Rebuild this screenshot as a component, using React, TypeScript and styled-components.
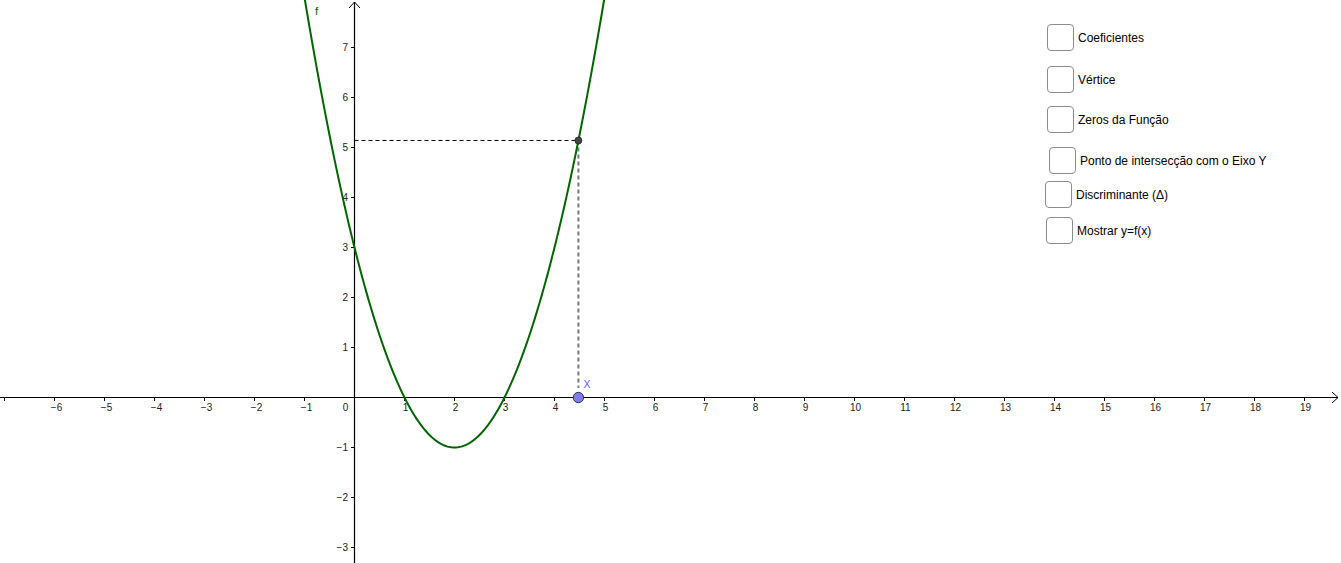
import styled, { createGlobalStyle } from 'styled-components'

const GlobalStyle = createGlobalStyle`
  html, body {
    margin: 0;
    padding: 0;
    background: #ffffff;
    overflow: hidden;
  }
`

const Canvas = styled.div`
  position: relative;
  width: 1341px;
  height: 563px;
  background: #ffffff;
  font-family: 'Liberation Sans', Arial, sans-serif;
`

const Graph = styled.svg`
  display: block;
`

const CheckItem = styled.label<{ $x: number; $y: number }>`
  position: absolute;
  left: ${({ $x }) => $x}px;
  top: ${({ $y }) => $y}px;
  display: flex;
  align-items: center;
  gap: 4px;
  font-size: 12px;
  color: #000000;
  white-space: nowrap;
  cursor: pointer;
`

const Box = styled.span`
  width: 25px;
  height: 25px;
  border: 1px solid #8c8c8c;
  border-radius: 4px;
  background: #ffffff;
  box-sizing: content-box;
`

// canvas coordinates of the origin and the scale (px per unit)
const OX = 354.5
const OY = 397.5
const UNIT = 50

const px = (x: number) => OX + x * UNIT
const py = (y: number) => OY - y * UNIT

const f = (x: number) => x * x - 4 * x + 3

const curvePath = () => {
  const pts: string[] = []
  for (let x = -1.05; x <= 5.05; x += 0.02) {
    pts.push(`${px(x).toFixed(2)},${py(f(x)).toFixed(2)}`)
  }
  return 'M' + pts.join(' L')
}

const xTicks = Array.from({ length: 27 }, (_, i) => i - 7).filter((k) => k !== 0)
const yTicks = [7, 6, 5, 4, 3, 2, 1, -1, -2, -3]

const minus = (k: number) => (k < 0 ? `\u2212${-k}` : `${k}`)

const PX = 4.478
const PY = f(PX)

const checks = [
  { x: 1047, y: 24, label: 'Coeficientes' },
  { x: 1047, y: 66, label: 'Vértice' },
  { x: 1047, y: 106, label: 'Zeros da Função' },
  { x: 1049, y: 147, label: 'Ponto de intersecção com o Eixo Y' },
  { x: 1045, y: 181, label: 'Discriminante (Δ)' },
  { x: 1046, y: 217, label: 'Mostrar y=f(x)' },
]

function App() {
  return (
    <>
      <GlobalStyle />
      <Canvas>
        <Graph width={1341} height={563} viewBox="0 0 1341 563">
          {/* axes */}
          <line x1={0} y1={OY} x2={1338} y2={OY} stroke="#000" strokeWidth={1.2} />
          <polyline points={`1332,392 1338,${OY} 1332,403`} fill="none" stroke="#000" strokeWidth={1} />
          <line x1={OX} y1={2} x2={OX} y2={563} stroke="#000" strokeWidth={1.2} />
          <polyline points={`349,8 ${OX},2 360,8`} fill="none" stroke="#000" strokeWidth={1} />

          {xTicks.map((k) => (
            <g key={`x${k}`}>
              <line x1={px(k)} y1={OY} x2={px(k)} y2={OY + 3.5} stroke="#000" strokeWidth={1} />
              {k > -7 && (
                <text
                  x={px(k) + (k < 0 ? 2 : 1)}
                  y={411}
                  fontSize={10}
                  textAnchor="middle"
                  fill="#222"
                  fontFamily="'Liberation Sans', Arial, sans-serif"
                >
                  {minus(k)}
                </text>
              )}
            </g>
          ))}
          <text x={345.5} y={411} fontSize={10} textAnchor="middle" fill="#222" fontFamily="'Liberation Sans', Arial, sans-serif">
            0
          </text>

          {yTicks.map((k) => (
            <g key={`y${k}`}>
              <line x1={OX - 3.5} y1={py(k)} x2={OX} y2={py(k)} stroke="#000" strokeWidth={1} />
              <text
                x={348}
                y={py(k) + 3.7}
                fontSize={10}
                textAnchor="end"
                fill="#222"
                fontFamily="'Liberation Sans', Arial, sans-serif"
              >
                {minus(k)}
              </text>
            </g>
          ))}

          {/* guide lines to the point on the curve */}
          <line x1={OX} y1={py(PY)} x2={px(PX)} y2={py(PY)} stroke="#000" strokeWidth={1} strokeDasharray="4 3" />
          <line x1={px(PX)} y1={py(PY)} x2={px(PX)} y2={388} stroke="#7a7a7a" strokeWidth={2} strokeDasharray="4 3" />

          {/* f(x) = x² − 4x + 3 */}
          <path d={curvePath()} fill="none" stroke="#006400" strokeWidth={2} />
          <text x={315} y={15} fontSize={11.5} fill="#006400" fontFamily="'Liberation Sans', Arial, sans-serif">
            f
          </text>

          <circle cx={px(PX)} cy={py(PY)} r={3.5} fill="#444" stroke="#222" strokeWidth={0.8} />

          <circle cx={px(PX)} cy={OY} r={5.2} fill="#7d7dfa" stroke="#333" strokeWidth={1} />
          <text x={583.5} y={388} fontSize={10.5} fill="#5c5cff" fontFamily="'Liberation Sans', Arial, sans-serif">
            X
          </text>
        </Graph>

        {checks.map((c) => (
          <CheckItem key={c.label} $x={c.x} $y={c.y}>
            <Box />
            <span>{c.label}</span>
          </CheckItem>
        ))}
      </Canvas>
    </>
  )
}

export default App
